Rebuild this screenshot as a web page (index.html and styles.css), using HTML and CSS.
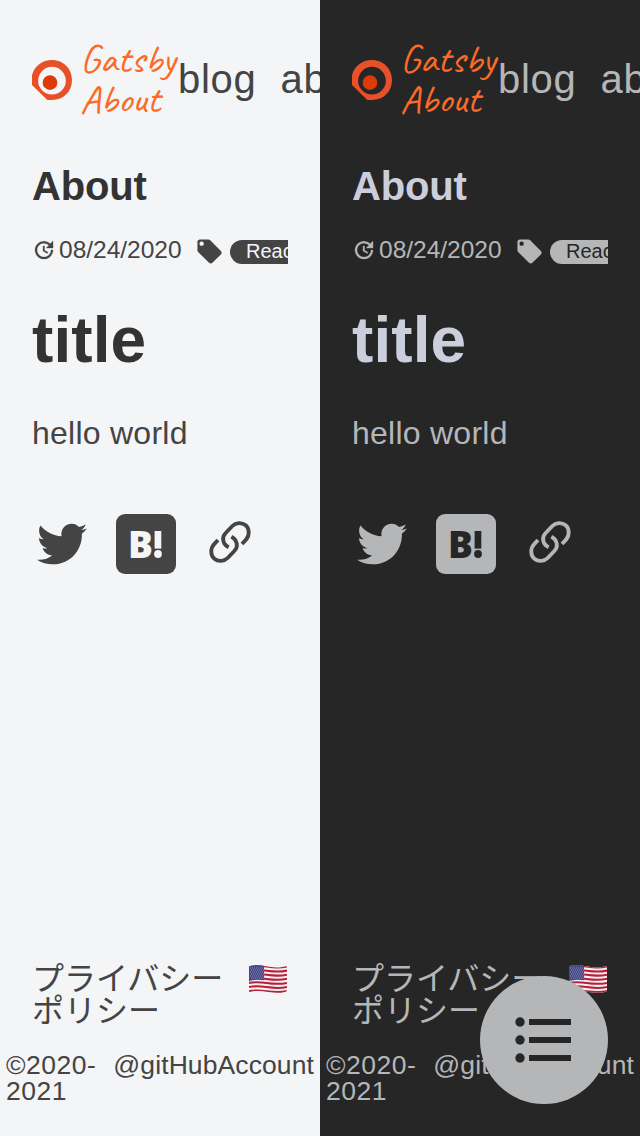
FILE: index.html
```
<!DOCTYPE html>
<html lang="ja">
<head>
<meta charset="utf-8">
<title>About</title>
<link rel="stylesheet" href="styles.css">
</head>
<body>
<svg class="sprite" aria-hidden="true">
  <symbol id="logo" viewBox="0 0 120 120"><path fill="#e8502a" fill-rule="evenodd" d="M0 46C7 18 30 0 60 0C95 0 120 27 120 60C120 95 95 120 60 120H46L0 75ZM60 20.500a41.500 41.500 0 1 0 0 83a41.500 41.500 0 1 0 0-83Z"/><circle cx="54" cy="68" r="22" fill="#dd3a0a"/></symbol>
  <symbol id="update" viewBox="0 0 24 24"><path stroke="currentColor" stroke-width=".3" d="M21 10.120h-6.780l2.740-2.820c-2.730-2.700-7.150-2.800-9.880-.1-2.730 2.710-2.730 7.080 0 9.790s7.150 2.710 9.880 0C18.320 15.650 19 14.080 19 12.100h2c0 1.980-.88 4.550-2.640 6.290-3.510 3.480-9.210 3.480-12.720 0-3.500-3.470-3.530-9.110-.02-12.580s9.140-3.470 12.650 0L21 3v7.120zM12.500 8v4.250l3.500 2.080-.72 1.210L11 13V8h1.500z"/></symbol>
  <symbol id="tag" viewBox="0 0 24 24"><path fill-rule="evenodd" d="M5.500,7.300A1.800,1.800 0 0,1 3.700,5.500A1.800,1.800 0 0,1 5.500,3.700A1.800,1.800 0 0,1 7.300,5.500A1.800,1.800 0 0,1 5.500,7.300M21.410,11.580L12.410,2.580C12.050,2.220 11.550,2 11,2H4C2.890,2 2,2.890 2,4V11C2,11.550 2.220,12.050 2.590,12.410L11.580,21.410C11.950,21.770 12.450,22 13,22C13.550,22 14.050,21.770 14.410,21.410L21.410,14.410C21.780,14.050 22,13.550 22,13C22,12.440 21.770,11.940 21.410,11.580Z"/></symbol>
  <symbol id="twitter" viewBox="0 0 512 512"><path d="M459.370 151.716c.325 4.548.325 9.097.325 13.645 0 138.720-105.583 298.558-298.558 298.558-59.452 0-114.680-17.219-161.137-47.106 8.447.974 16.568 1.299 25.340 1.299 49.055 0 94.213-16.568 130.274-44.832-46.132-.975-84.792-31.188-98.112-72.772 6.498.974 12.995 1.624 19.818 1.624 9.421 0 18.843-1.300 27.614-3.573-48.081-9.747-84.143-51.980-84.143-102.985v-1.299c13.969 7.797 30.214 12.670 47.431 13.319-28.264-18.843-46.781-51.005-46.781-87.391 0-19.492 5.197-37.360 14.294-52.954 51.655 63.675 129.300 105.258 216.365 109.807-1.624-7.797-2.599-15.918-2.599-24.040 0-57.828 46.782-104.934 104.934-104.934 30.213 0 57.502 12.670 76.670 33.137 23.715-4.548 46.456-13.320 66.599-25.340-7.798 24.366-24.366 44.833-46.132 57.827 21.117-2.273 41.584-8.122 60.426-16.243-14.292 20.791-32.161 39.308-52.628 54.253z"/></symbol>
  <symbol id="exclamation" viewBox="0 0 8 27"><path d="M.6 0h6.700v17.600H.6z"/><circle cx="4" cy="23" r="3.900"/></symbol>
  <symbol id="link" viewBox="-90 -90 180 180"><g id="half" fill="none" stroke="currentColor" stroke-width="11.500"><path d="M36 6L48-7C60-21 58-41 47-50C35-60 17-58 7-48L-13-27C-26-14-22 7-4 16"/></g><use href="#half" transform="rotate(180)"/></symbol>
  <symbol id="list" viewBox="0 0 56 46"><circle cx="5" cy="5" r="4.700"/><circle cx="5" cy="23" r="4.700"/><circle cx="5" cy="41" r="4.700"/><path d="M14 2h42v6H14zM14 20h42v6H14zM14 38h42v6H14z"/></symbol>
  <symbol id="flag" viewBox="0 0 38 28">
    <clipPath id="wave"><path d="M0 2.500Q0 1 2 .8C14-1.500 22 5 37 1.200Q38 1 38 2V25Q38 26.500 36 27C23 30 14 23.500 1 27Q0 27.300 0 26Z"/></clipPath>
    <g clip-path="url(#wave)"><rect width="38" height="28" fill="#f4f0f1"/>
    <path fill="none" stroke="#b5213c" stroke-width="2.050" d="M0 1.500C14-1.500 22 5 38 1.500M0 5.600C14 2.600 22 9.100 38 5.600M0 9.700C14 6.700 22 13.200 38 9.700M0 13.800C14 10.800 22 17.300 38 13.800M0 17.900C14 14.900 22 21.400 38 17.900M0 22C14 19 22 25.500 38 22M0 26.100C14 23.100 22 29.600 38 26.100"/>
    <path fill="#464785" d="M0 0H15V15.200C9 14 5 15 0 16Z"/>
    <path fill="none" stroke="#b4b5d3" stroke-width=".8" stroke-dasharray=".8 1.200" d="M1 3H15M2 5H15M1 7H15M2 9H15M1 11H15M2 13H15"/></g>
  </symbol>
</svg>
<div class="screens">
  <section class="screen light">
    <header class="header">
      <svg class="logo"><use href="#logo"/></svg>
      <div class="brand">Gatsby<br>About</div>
      <nav class="nav"><span>blog</span><span>about</span></nav>
    </header>
    <main class="main">
      <h2 class="post-title">About</h2>
      <div class="meta"><svg class="update"><use href="#update"/></svg><span class="date">08/24/2020</span><svg class="tag-icon"><use href="#tag"/></svg><span class="tag">React</span></div>
      <h1 class="title">title</h1>
      <p class="text">hello world</p>
      <div class="share"><svg class="twitter"><use href="#twitter"/></svg><span class="hatena"><span class="hatena-text">B</span><svg class="exclamation"><use href="#exclamation"/></svg></span><svg class="link"><use href="#link"/></svg></div>
    </main>
    <footer class="footer">
      <div class="policy"><span class="policy-text">プライバシー<br>ポリシー</span><svg class="flag"><use href="#flag"/></svg></div>
      <div class="copyright"><span class="years">©2020-<br>2021</span><span>@gitHubAccount</span></div>
    </footer>
  </section>
  <section class="screen dark">
    <header class="header">
      <svg class="logo"><use href="#logo"/></svg>
      <div class="brand">Gatsby<br>About</div>
      <nav class="nav"><span>blog</span><span>about</span></nav>
    </header>
    <main class="main">
      <h2 class="post-title">About</h2>
      <div class="meta"><svg class="update"><use href="#update"/></svg><span class="date">08/24/2020</span><svg class="tag-icon"><use href="#tag"/></svg><span class="tag">React</span></div>
      <h1 class="title">title</h1>
      <p class="text">hello world</p>
      <div class="share"><svg class="twitter"><use href="#twitter"/></svg><span class="hatena"><span class="hatena-text">B</span><svg class="exclamation"><use href="#exclamation"/></svg></span><svg class="link"><use href="#link"/></svg></div>
    </main>
    <footer class="footer">
      <div class="policy"><span class="policy-text">プライバシー<br>ポリシー</span><svg class="flag"><use href="#flag"/></svg></div>
      <div class="copyright"><span class="years">©2020-<br>2021</span><span>@gitHubAccount</span></div>
    </footer>
    <div class="menu-button"><svg class="list"><use href="#list"/></svg></div>
  </section>
</div>
</body>
</html>
```
FILE: styles.css
```
* { box-sizing: border-box; }
body { margin: 0; font-family: "Liberation Sans", "Noto Sans CJK JP", sans-serif; }
svg { display: block; flex: none; fill: currentColor; }
.sprite { position: absolute; width: 0; height: 0; }
.screens { display: grid; grid-template-columns: 320px 320px; }
.screen { position: relative; height: 1136px; overflow: hidden; display: flex; flex-direction: column; color: var(--fg); background: var(--bg); }
.light { --bg: #f4f5f7; --fg: #444444; --head: #333333; }
.dark { --bg: #262626; --fg: #b5b6b8; --head: #cbcedb; }
.header { display: flex; align-items: center; height: 160px; padding-left: 32px; }
.logo { width: 40px; height: 40px; }
.brand { flex: none; width: 98px; margin: -2px 0 0 8px; color: #fa6b29; font: 40px/40px "Caveat", cursive; letter-spacing: .2px; }
.nav { display: flex; gap: 24px; font-size: 40px; line-height: 46px; letter-spacing: .7px; margin-top: -3px; }
.main { padding: 0 32px; }
.post-title { margin: 3px 0 0; font-size: 40px; line-height: 46px; letter-spacing: -.2px; color: var(--head); }
.meta { display: flex; align-items: center; height: 32px; margin-top: 26px; overflow: hidden; }
.update { width: 24px; height: 24px; margin-top: -2px; }
.date { flex: none; margin: -2px 14px 0 3px; width: 122px; font-size: 24.500px; line-height: 28px; }
.tag-icon { width: 29px; height: 29px; margin: 0 6px 0 0; }
.meta .tag { flex: none; height: 24px; padding: 0 16px; border-radius: 12px; font-size: 20px; line-height: 23px; color: var(--bg); background: var(--fg); margin-top: 1px; }
.title { margin: 36px 0 0; font-size: 64px; line-height: 74px; letter-spacing: .1px; color: var(--head); }
.text { margin: 38px 0 0; font-size: 32px; line-height: 36px; letter-spacing: .25px; }
.share { display: flex; align-items: center; height: 60px; margin-top: 63px; }
.twitter { width: 50px; height: 50px; margin-left: 5px; }
.hatena { display: flex; width: 60px; height: 60px; padding-left: 12px; margin-left: 29px; border-radius: 9px; background: var(--fg); color: var(--bg); }
.hatena-text { width: 26px; font: 800 37px/59px "Open Sans", "Noto Sans", sans-serif; }
.exclamation { width: 8px; height: 27px; margin-top: 16.500px; }
.link { width: 60px; height: 60px; margin: -4px 0 0 24px; }
.footer { margin-top: auto; height: 174px; }
.policy { display: flex; justify-content: space-between; padding: 0 32px; height: 64px; }
.policy-text { font: 32px/32px "Noto Sans CJK JP", sans-serif; margin-top: -2px; }
.flag { width: 38px; height: 28px; margin: 3px 1px 0 0; }
.copyright { display: flex; justify-content: space-between; margin-top: 26px; padding: 0 6px; font-size: 26.500px; line-height: 26px; letter-spacing: .1px; }
.years { letter-spacing: .5px; font-size: 26.500px; }
.menu-button { position: absolute; right: 32px; bottom: 32px; display: flex; align-items: center; justify-content: center; width: 128px; height: 128px; border-radius: 50%; color: var(--bg); background: var(--fg); }
.list { width: 56px; height: 46px; margin-left: -2px; }
```
